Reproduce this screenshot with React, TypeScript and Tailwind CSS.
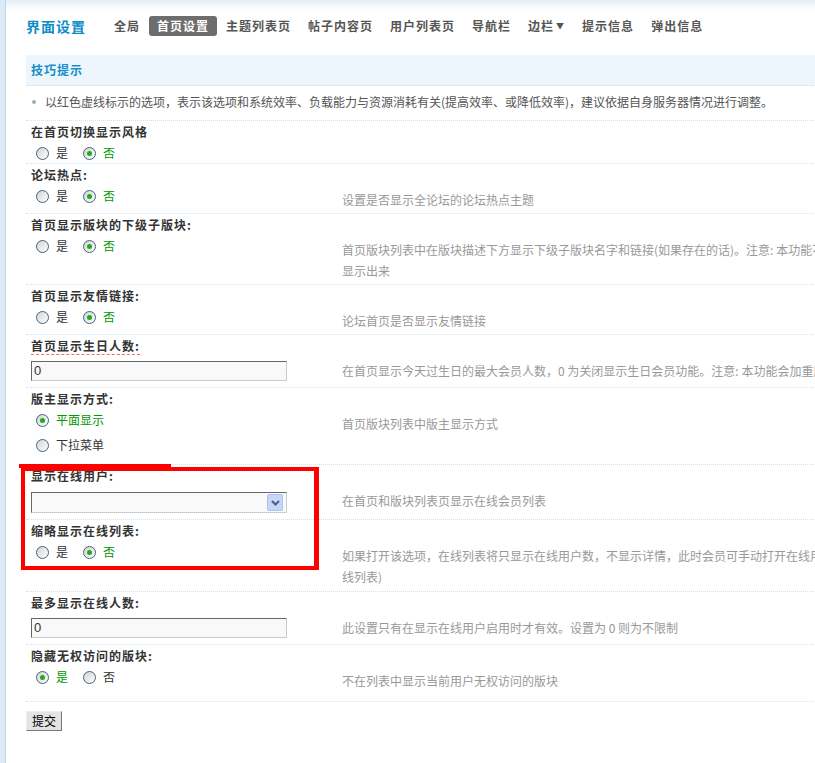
import type { ReactNode } from 'react';

type Opt = { label: string; checked?: boolean };

function Radio({ label, checked }: Opt) {
  return (
    <span className="inline-flex h-[18px] items-center">
      <span className="flex h-[13px] w-[13px] items-center justify-center rounded-full border border-[#3f6388] bg-linear-to-br from-[#d3d3cd] to-white">
        {checked && <span className="h-[5px] w-[5px] rounded-full bg-[#22a822]" />}
      </span>
      <span className={`ml-[7px] leading-[18px] ${checked ? 'text-[#090]' : 'text-[#333]'}`}>{label}</span>
    </span>
  );
}

function Radios({ opts, vertical }: { opts: Opt[]; vertical?: boolean }) {
  return (
    <div className={vertical ? 'flex flex-col gap-[7px] pl-[5px]' : 'flex gap-[15px] pl-[5px]'}>
      {opts.map((o) => (
        <Radio key={o.label} {...o} />
      ))}
    </div>
  );
}

function TextBox({ value }: { value: string }) {
  return (
    <div className="h-[20px] w-[256px] border border-t-[#666] border-l-[#666] border-b-[#ccc] border-r-[#ccc] bg-[#f9f9f9] pl-[2px] font-['Liberation_Sans',sans-serif] text-[13px] leading-[18px] text-[#333]">
      {value}
    </div>
  );
}

function SelectBox() {
  return (
    <div className="flex h-[21px] w-[256px] items-center justify-end border border-t-[#666] border-l-[#666] border-b-[#ccc] border-r-[#ccc] bg-[#f9f9f9] pr-[3px]">
      <span className="flex h-[17px] w-[16px] items-center justify-center rounded-[2px] border border-[#adc2ef] bg-[#c5d6f8]">
        <svg width="9" height="6" viewBox="0 0 9 6">
          <path d="M1 1l3.5 3.5L8 1" fill="none" stroke="#4b5f8a" strokeWidth="2" />
        </svg>
      </span>
    </div>
  );
}

type RowProps = {
  title: ReactNode;
  left: ReactNode;
  leftPad: string;
  desc?: ReactNode;
  descPad?: string;
};

function Row({ title, left, leftPad, desc, descPad = 'pb-[3px]' }: RowProps) {
  return (
    <div className="border-b border-dotted border-[#cfe2f0]">
      <div className="h-[21px] pl-[5px] font-bold leading-[21px] tracking-[1px] text-[#333]">{title}</div>
      <div className="flex">
        <div className={`w-[311px] shrink-0 pl-[5px] ${leftPad}`}>{left}</div>
        {desc && (
          <div className={`whitespace-nowrap pl-[5px] pt-[4px] leading-[21px] text-[#999] ${descPad}`}>{desc}</div>
        )}
      </div>
    </div>
  );
}

const navItems = ['全局', '首页设置', '主题列表页', '帖子内容页', '用户列表页', '导航栏', '边栏', '提示信息', '弹出信息'];

export default function App() {
  const yesNo = (yes: boolean): Opt[] => [
    { label: '是', checked: yes },
    { label: '否', checked: !yes },
  ];

  return (
    <div className="relative flex min-h-[763px] w-full overflow-hidden bg-white font-['Noto_Sans_CJK_SC',sans-serif] text-[12px]">
      <div className="w-[6px] shrink-0 border-r border-[#bcd5e9] bg-[#dbeaf6]" />

      <div className="min-w-0 flex-1">
        <div className="h-[10px] bg-linear-to-b from-[#e2eef8] to-white" />

        <div className="pl-[20px] pt-[6px]">
          <div className="mb-[19px] flex h-[20px] items-center">
            <h1 className="mr-[20px] text-[14px] font-bold tracking-[1px] text-[#0b8dc8]">界面设置</h1>
            <div className="flex gap-[1px]">
              {navItems.map((n) => (
                <span
                  key={n}
                  className={`flex h-[20px] items-center rounded-[3px] px-[8px] text-[12px] font-bold tracking-[1px] ${
                    n === '首页设置' ? 'bg-[#6d6d6d] text-white' : 'text-[#555]'
                  }`}
                >
                  {n}
                  {n === '边栏' && <span className="ml-[2px] text-[8px]">▼</span>}
                </span>
              ))}
            </div>
          </div>

          <div className="w-[1100px]">
            <div className="h-[31px] border-b border-dotted border-[#cfe2f0] bg-[#eef6fd] pl-[5px] font-bold leading-[30px] tracking-[1px] text-[#168fc8]">
              技巧提示
            </div>
            <div className="flex items-center border-b border-dotted border-[#cfe2f0] pb-[8px] pt-[5px] leading-[21px] text-[#555]">
              <span className="ml-[6px] mr-[9px] h-[4px] w-[4px] rounded-full bg-[#aaa]" />
              以红色虚线标示的选项，表示该选项和系统效率、负载能力与资源消耗有关(提高效率、或降低效率)，建议依据自身服务器情况进行调整。
            </div>

            <Row title="在首页切换显示风格" leftPad="pt-[2px] pb-[1px]" left={<Radios opts={yesNo(false)} />} />
            <Row
              title="论坛热点:"
              leftPad="pt-[2px]"
              left={<Radios opts={yesNo(false)} />}
              desc="设置是否显示全论坛的论坛热点主题"
            />
            <Row
              title="首页显示版块的下级子版块:"
              leftPad="pt-[2px]"
              left={<Radios opts={yesNo(false)} />}
              desc={
                <>
                  首页版块列表中在版块描述下方显示下级子版块名字和链接(如果存在的话)。注意: 本功能不考虑子版块特殊浏览权限的情况，只要存在即会被
                  <br />
                  显示出来
                </>
              }
            />
            <Row
              title="首页显示友情链接:"
              leftPad="pt-[2px]"
              left={<Radios opts={yesNo(false)} />}
              desc="论坛首页是否显示友情链接"
            />
            <Row
              title={<span className="border-b border-dashed border-[#f66]">首页显示生日人数:</span>}
              leftPad="pt-[5px] pb-[6px]"
              left={<TextBox value="0" />}
              desc="在首页显示今天过生日的最大会员人数，0 为关闭显示生日会员功能。注意: 本功能会加重服务器负担"
            />
            <Row
              title="版主显示方式:"
              leftPad="pt-[2px] pb-[10px]"
              left={
                <Radios
                  vertical
                  opts={[
                    { label: '平面显示', checked: true },
                    { label: '下拉菜单' },
                  ]}
                />
              }
              desc="首页版块列表中版主显示方式"
            />
            <Row
              title="显示在线用户:"
              leftPad="pt-[6px] pb-[6px]"
              left={<SelectBox />}
              desc="在首页和版块列表页显示在线会员列表"
            />
            <Row
              title="缩略显示在线列表:"
              leftPad="pt-[2px]"
              left={<Radios opts={yesNo(false)} />}
              descPad="pb-[4px]"
              desc={
                <>
                  如果打开该选项，在线列表将只显示在线用户数，不显示详情，此时会员可手动打开在线用户列表查看详情(即原来的完整显示在
                  <br />
                  线列表)
                </>
              }
            />
            <Row
              title="最多显示在线人数:"
              leftPad="pt-[5px] pb-[6px]"
              left={<TextBox value="0" />}
              desc="此设置只有在显示在线用户启用时才有效。设置为 0 则为不限制"
            />
            <Row
              title="隐藏无权访问的版块:"
              leftPad="pt-[2px]"
              left={<Radios opts={yesNo(true)} />}
              descPad="pb-[10px]"
              desc="不在列表中显示当前用户无权访问的版块"
            />

            <button
              type="button"
              className="mt-[9px] h-[20px] w-[36px] border border-t-[#eee] border-l-[#eee] border-b-[#777] border-r-[#777] bg-[#e4e4e4] text-[12px] leading-[18px] text-black"
            >
              提交
            </button>
          </div>
        </div>
      </div>

      <div className="absolute left-[19px] top-[464px] h-[4px] w-[152px] bg-[#f00]" />
      <div className="absolute left-[21px] top-[467px] h-[103px] w-[298px] border-[4px] border-r-[5px] border-[#f00]" />
    </div>
  );
}
